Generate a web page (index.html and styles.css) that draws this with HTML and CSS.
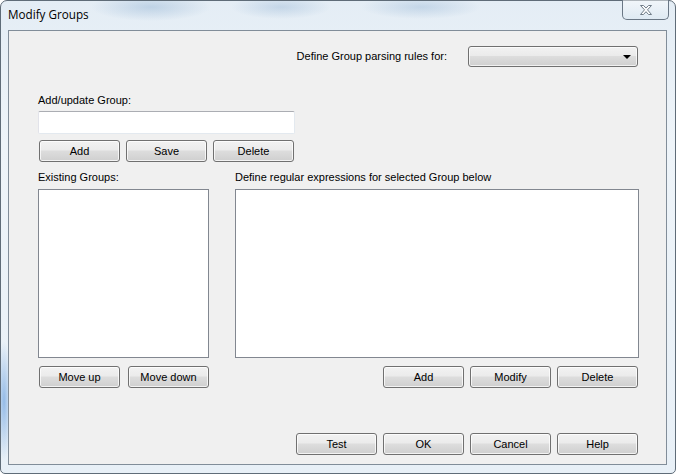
FILE: index.html
```html
<!DOCTYPE html>
<html lang="en">
<head>
  <meta charset="UTF-8" />
  <title>Modify Groups</title>
  <link rel="stylesheet" href="styles.css">
</head>
<body>
  <div class="window">
    <div class="titlebar">
      <span class="title">Modify Groups</span>
      <button class="close" type="button" aria-label="Close">
        <svg width="16" height="12" viewBox="0 0 16 12">
          <path d="M2.5 1.5h3l2.5 2.6 2.5-2.6h3l-4 4.3 4 4.7h-3l-2.5-2.8-2.5 2.8h-3l4-4.7z" fill="#fff" stroke="#707c88" stroke-width="1"/>
        </svg>
      </button>
    </div>

    <div class="client">
      <div class="rule-row">
        <span class="label">Define Group parsing rules for:</span>
        <div class="combo"><span class="arrow"></span></div>
      </div>

      <div class="group-edit">
        <span class="label">Add/update Group:</span>
        <input class="text" type="text" />
        <div class="btns">
          <button class="btn" type="button">Add</button>
          <button class="btn" type="button">Save</button>
          <button class="btn" type="button">Delete</button>
        </div>
      </div>

      <div class="lists">
        <div class="col left">
          <span class="label">Existing Groups:</span>
          <div class="listbox"></div>
          <div class="btns">
            <button class="btn" type="button">Move up</button>
            <button class="btn" type="button">Move down</button>
          </div>
        </div>
        <div class="col right">
          <span class="label">Define regular expressions for selected Group below</span>
          <div class="listbox"></div>
          <div class="btns end">
            <button class="btn" type="button">Add</button>
            <button class="btn" type="button">Modify</button>
            <button class="btn" type="button">Delete</button>
          </div>
        </div>
      </div>

      <div class="btns end footer">
        <button class="btn" type="button">Test</button>
        <button class="btn" type="button">OK</button>
        <button class="btn" type="button">Cancel</button>
        <button class="btn" type="button">Help</button>
      </div>
    </div>
  </div>
</body>
</html>
```

FILE: styles.css
```css
* {
  box-sizing: border-box;
}

body {
  margin: 0;
  padding: 0;
  width: 676px;
  height: 474px;
  overflow: hidden;
  font-family: "Liberation Sans", Arial, sans-serif;
  font-size: 11px;
  color: #000;
}

.window {
  width: 676px;
  height: 474px;
  padding: 0 8px 8px 7px;
  border: 1px solid #5f6c78;
  border-radius: 7px 7px 5px 5px;
  background:
    radial-gradient(ellipse 60px 14px at 150px 6px, rgba(120, 160, 200, 0.35), transparent),
    radial-gradient(ellipse 50px 12px at 280px 6px, rgba(120, 160, 200, 0.3), transparent),
    radial-gradient(ellipse 60px 12px at 420px 6px, rgba(120, 160, 200, 0.3), transparent),
    radial-gradient(ellipse 8px 60px at 3px 400px, rgba(90, 150, 220, 0.6), transparent),
    linear-gradient(to bottom, #e4edf5, #eef4f9 30%, #e8f0f7);
  display: flex;
  flex-direction: column;
}

.titlebar {
  height: 29px;
  display: flex;
  align-items: flex-start;
  justify-content: space-between;
}

.title {
  font-family: "Open Sans", "Noto Sans", sans-serif;
  font-size: 11.7px;
  margin-top: 5px;
  color: #000;
}

.close {
  width: 47px;
  height: 20px;
  margin-top: -1px;
  margin-right: -2px;
  padding: 0;
  border: 1px solid #6a7785;
  border-top: none;
  border-radius: 0 0 5px 5px;
  background: linear-gradient(to bottom, rgba(255, 255, 255, 0.5), rgba(220, 232, 242, 0.7));
  display: flex;
  align-items: center;
  justify-content: center;
}

.client {
  flex: 1;
  border: 1px solid #818d99;
  background: #f0f0f0;
  padding: 15px 27px 0 29px;
  display: flex;
  flex-direction: column;
}

.label {
  display: block;
  line-height: 13px;
}

.rule-row {
  display: flex;
  align-items: center;
  justify-content: flex-end;
  gap: 21px;
  height: 21px;
  padding-right: 1px;
}

.combo {
  width: 170px;
  height: 21px;
  border: 1px solid #707070;
  border-radius: 3px;
  background: linear-gradient(to bottom, #f2f2f2 0%, #ebebeb 45%, #dddddd 50%, #cfcfcf 100%);
  box-shadow: inset 0 0 0 1px rgba(255, 255, 255, 0.7);
  display: flex;
  align-items: center;
  justify-content: flex-end;
  padding-right: 6px;
}

.arrow {
  width: 0;
  height: 0;
  border-left: 4px solid transparent;
  border-right: 4px solid transparent;
  border-top: 4px solid #000;
}

.group-edit {
  margin-top: 27px;
  width: 256px;
}

.text {
  display: block;
  width: 257px;
  height: 23px;
  margin-top: 4px;
  border: 1px solid #e3e9ef;
  border-top-color: #abadb3;
  border-left-color: #e2e3ea;
  border-radius: 2px;
  background: #fff;
}

.btns {
  display: flex;
  gap: 6px;
  margin-top: 6px;
  padding-left: 1px;
}

.btns.end {
  justify-content: flex-end;
  padding-left: 0;
  padding-right: 1px;
}

.btn {
  width: 81px;
  height: 22px;
  padding: 0;
  border: 1px solid #707070;
  border-radius: 3px;
  background: linear-gradient(to bottom, #f2f2f2 0%, #ebebeb 45%, #dddddd 50%, #cfcfcf 100%);
  box-shadow: inset 0 0 0 1px rgba(255, 255, 255, 0.75);
  font-family: inherit;
  font-size: 11px;
  color: #000;
}

.lists {
  display: flex;
  gap: 26px;
  margin-top: 9px;
}

.col.left {
  width: 171px;
}

.col.right {
  flex: 1;
}

.listbox {
  height: 169px;
  margin-top: 5px;
  border: 1px solid #828790;
  background: #fff;
}

.col .btns {
  margin-top: 8px;
}

.col.left .btns {
  gap: 8px;
}

.footer {
  margin-top: 45px;
}
```
